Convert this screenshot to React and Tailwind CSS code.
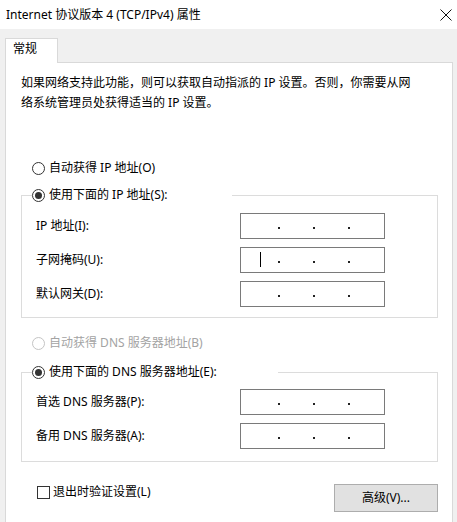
import React from "react";

function Radio({ checked = false, disabled = false }) {
  return (
    <span
      className={
        "w-[13px] h-[13px] rounded-full border flex items-center justify-center shrink-0 bg-white " +
        (disabled ? "border-[#c4c4c4]" : "border-[#333333]")
      }
    >
      {checked && <span className="w-[7px] h-[7px] rounded-full bg-[#333333]" />}
    </span>
  );
}

function IpBox({ cursor = false }) {
  return (
    <div className="relative w-[145px] h-[26px] border border-[#7a7a7a] bg-white flex items-center pl-[37px] gap-[33px]">
      {cursor && <span className="absolute left-[19px] top-[4px] w-px h-[15px] bg-black" />}
      <span className="w-[2px] h-[2px] bg-[#222] mt-[3px]" />
      <span className="w-[2px] h-[2px] bg-[#222] mt-[3px]" />
      <span className="w-[2px] h-[2px] bg-[#222] mt-[3px]" />
    </div>
  );
}

function Row({ label, cursor }) {
  return (
    <div className="flex items-center h-[26px]">
      <span className="w-[208px] pl-[4px] leading-[20px]">{label}</span>
      <IpBox cursor={cursor} />
    </div>
  );
}

export default function App() {
  return (
    <div className="w-[457px] h-[522px] overflow-hidden bg-[#f0f0f0] text-[12px] text-black font-['Noto_Sans','Noto_Sans_CJK_SC',sans-serif]">
      <div className="h-[29px] bg-white flex items-center justify-between pl-[6px] pr-[5px]">
        <span className="leading-[20px]">Internet 协议版本 4 (TCP/IPv4) 属性</span>
        <svg width="12" height="12" viewBox="0 0 12 12" className="mt-[1px]">
          <path d="M0.5 0.5 L11.5 11.5 M11.5 0.5 L0.5 11.5" stroke="#111" strokeWidth="1" fill="none" />
        </svg>
      </div>
      <div className="pt-[9px] pl-[5px]">
        <div className="relative z-10 w-[53px] h-[25px] bg-white border border-b-0 border-[#d9d9d9] pl-[7px] leading-[20px]">
          常规
        </div>
        <div className="-mt-px w-[448px] h-[600px] bg-white border border-[#d9d9d9] pt-[10px] px-[15px]">
          <p className="leading-[20px] whitespace-nowrap">
            如果网络支持此功能，则可以获取自动指派的 IP 设置。否则，你需要从网
            <br />
            络系统管理员处获得适当的 IP 设置。
          </p>

          <div className="mt-[45px] h-[20px] pl-[11px] flex items-center gap-[4px] leading-[20px]">
            <Radio />
            <span>自动获得 IP 地址(O)</span>
          </div>

          <fieldset className="mt-[7px] w-[417px] border border-[#dcdcdc] px-[10px] pb-[10px]">
            <legend className="w-[200px] p-0">
              <div className="h-[20px] flex items-center gap-[4px] leading-[20px]">
                <Radio checked />
                <span>使用下面的 IP 地址(S):</span>
              </div>
            </legend>
            <div className="mt-[8px] flex flex-col gap-[8px]">
              <Row label="IP 地址(I):" />
              <Row label="子网掩码(U):" cursor />
              <Row label="默认网关(D):" />
            </div>
          </fieldset>

          <div className="mt-[15px] h-[20px] pl-[11px] flex items-center gap-[4px] leading-[20px] text-[#a3a3a3]">
            <Radio disabled />
            <span>自动获得 DNS 服务器地址(B)</span>
          </div>

          <fieldset className="mt-[9px] w-[417px] border border-[#dcdcdc] px-[10px] pb-[12px]">
            <legend className="w-[246px] p-0">
              <div className="h-[20px] flex items-center gap-[4px] leading-[20px]">
                <Radio checked />
                <span>使用下面的 DNS 服务器地址(E):</span>
              </div>
            </legend>
            <div className="mt-[7px] flex flex-col gap-[8px]">
              <Row label="首选 DNS 服务器(P):" />
              <Row label="备用 DNS 服务器(A):" />
            </div>
          </fieldset>

          <div className="mt-[22px] w-[417px] flex justify-between items-start">
            <div className="h-[16px] pl-[16px] flex items-center gap-[3px] leading-[20px]">
              <span className="w-[13px] h-[13px] border border-[#333333] bg-white shrink-0" />
              <span>退出时验证设置(L)</span>
            </div>
            <div className="w-[104px] h-[28px] bg-[#e1e1e1] border border-[#adadad] flex items-center justify-center leading-[20px]">
              高级(V)...
            </div>
          </div>
        </div>
      </div>
    </div>
  );
}
